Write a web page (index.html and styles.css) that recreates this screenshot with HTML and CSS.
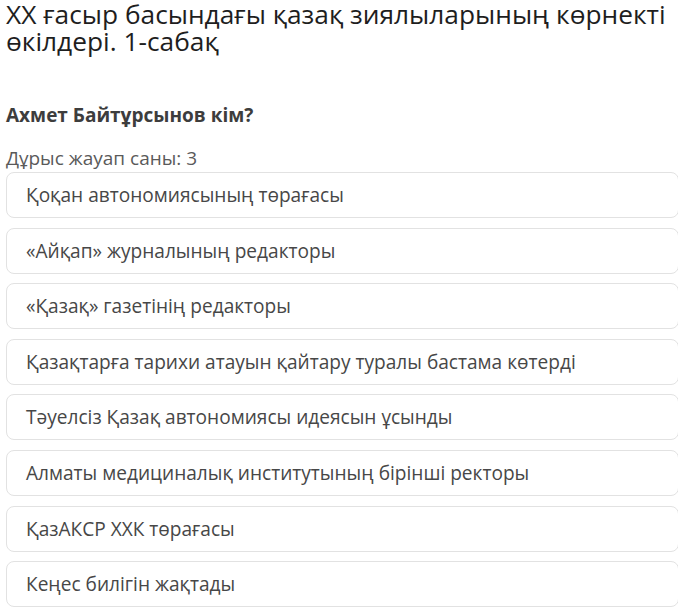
FILE: index.html
```html
<!DOCTYPE html>
<html lang="kk">
<head>
<meta charset="utf-8">
<link rel="stylesheet" href="styles.css">
</head>
<body>
<main class="page">
  <h1 class="title">ХХ ғасыр басындағы қазақ зиялыларының көрнекті өкілдері. 1-сабақ</h1>
  <h2 class="question">Ахмет Байтұрсынов кім?</h2>
  <p class="count">Дұрыс жауап саны: 3</p>
  <ul class="options">
    <li class="option">Қоқан автономиясының төрағасы</li>
    <li class="option">«Айқап» журналының редакторы</li>
    <li class="option">«Қазақ» газетінің редакторы</li>
    <li class="option">Қазақтарға тарихи атауын қайтару туралы бастама көтерді</li>
    <li class="option">Тәуелсіз Қазақ автономиясы идеясын ұсынды</li>
    <li class="option">Алматы медициналық институтының бірінші ректоры</li>
    <li class="option">ҚазАКСР ХХК төрағасы</li>
    <li class="option">Кеңес билігін жақтады</li>
  </ul>
</main>
</body>
</html>
```

FILE: styles.css
```css
html, body {
  margin: 0;
  padding: 0;
  background: #ffffff;
}
body {
  font-family: "Open Sans", "Noto Sans", sans-serif;
  width: 678px;
  height: 612px;
  overflow: hidden;
}
.page {
  padding: 0 0 0 6px;
}
.title {
  margin: 0;
  padding-top: 1px;
  font-size: 26.3px;
  line-height: 27px;
  font-weight: 400;
  color: #1e1e1e;
}
.question {
  margin: 48px 0 0 0;
  font-size: 19px;
  line-height: 24px;
  font-weight: 700;
  color: #3d3d3d;
}
.count {
  margin: 19px 0 0 0;
  font-size: 19px;
  line-height: 24px;
  color: #5a5a5a;
}
.options {
  list-style: none;
  margin: 2px 0 0 0;
  padding: 0;
  display: flex;
  flex-direction: column;
  gap: 9.6px;
}
.option {
  box-sizing: border-box;
  height: 46px;
  border: 1px solid #e2e2e2;
  border-radius: 8px;
  margin-right: -1px;
  padding: 0 0 0 19px;
  display: flex;
  align-items: center;
  font-size: 19.1px;
  color: #474747;
}
```
